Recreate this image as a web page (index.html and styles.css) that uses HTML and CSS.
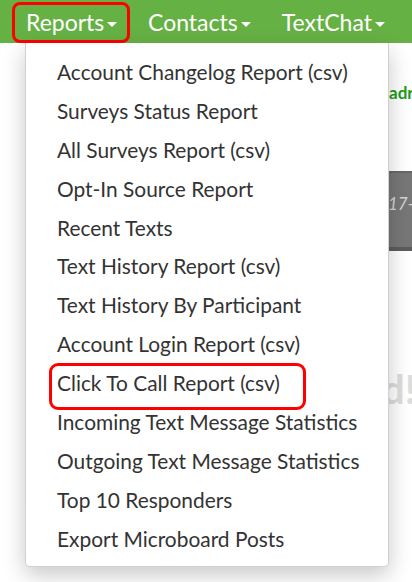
FILE: index.html
```html
<!DOCTYPE html>
<html>
<head>
<meta charset="utf-8">
<link rel="stylesheet" href="styles.css">
</head>
<body>
<nav class="navbar">
  <div class="nav-item highlighted">
    <span class="nav-link">Reports<span class="caret"></span></span>
    <ul class="dropdown">
      <li>Account Changelog Report (csv)</li>
      <li>Surveys Status Report</li>
      <li>All Surveys Report (csv)</li>
      <li>Opt-In Source Report</li>
      <li>Recent Texts</li>
      <li>Text History Report (csv)</li>
      <li>Text History By Participant</li>
      <li>Account Login Report (csv)</li>
      <li class="marked">Click To Call Report (csv)</li>
      <li>Incoming Text Message Statistics</li>
      <li>Outgoing Text Message Statistics</li>
      <li>Top 10 Responders</li>
      <li>Export Microboard Posts</li>
    </ul>
  </div>
  <div class="nav-item"><span class="nav-link">Contacts<span class="caret"></span></span></div>
  <div class="nav-item"><span class="nav-link">TextChat<span class="caret"></span></span></div>
</nav>
<main class="page">
  <p class="login-line">adr</p>
  <div class="status-box"><span class="date">17-2</span></div>
  <h1 class="welcome">d!</h1>
</main>
</body>
</html>
```
FILE: styles.css
```css
* { box-sizing: border-box; }
html, body { margin: 0; padding: 0; }
body {
  font-family: Lato, "Open Sans", sans-serif;
  background: #fff;
  width: 412px;
  height: 582px;
  overflow: hidden;
  position: relative;
}
.navbar {
  display: flex;
  height: 43px;
  background: #66b144;
  padding-left: 12px;
  align-items: stretch;
}
.nav-item {
  position: relative;
  display: flex;
  align-items: center;
}
.nav-item:nth-child(2) { margin-left: 4px; }
.nav-item:nth-child(3) { margin-left: 3px; }
.nav-link {
  color: #fff;
  font-size: 23px;
  padding: 0 14px;
  display: flex;
  align-items: center;
  height: 41px;
  margin-top: 2px;
  line-height: 1;
}
.nav-item.highlighted .nav-link {
  border: 3px solid #f00;
  border-radius: 8px;
  padding: 0 11px;
  width: 118px;
}
.caret {
  display: inline-block;
  width: 0;
  height: 0;
  margin-left: 3px;
  margin-top: 3px;
  border-left: 5px solid transparent;
  border-right: 5px solid transparent;
  border-top: 5px solid #fff;
}
.dropdown {
  position: absolute;
  left: 13px;
  top: 43px;
  width: 364px;
  margin: 0;
  padding: 9px 0 8px 0;
  list-style: none;
  background: #fff;
  border: 1px solid rgba(0,0,0,.18);
  border-top: none;
  border-radius: 0 0 5px 5px;
  box-shadow: 0 8px 22px rgba(0,0,0,.22);
  z-index: 10;
}
.dropdown li {
  height: 38.9px;
  display: flex;
  align-items: center;
  padding-left: 31px;
  font-size: 20.9px;
  color: #333;
  white-space: nowrap;
}
.dropdown li.marked {
  position: relative;
}
.dropdown li.marked::before {
  content: "";
  position: absolute;
  left: 23px;
  top: 0;
  width: 251px;
  height: 41px;
  border: 3px solid #f00;
  border-radius: 9px;
}
.page {
  padding: 40px 0 0 389px;
  white-space: nowrap;
  overflow: hidden;
}
.login-line {
  margin: 0;
  color: #1f9b1f;
  font-weight: bold;
  font-size: 17px;
  line-height: 20px;
  height: 88px;
}
.status-box {
  margin-left: -60px;
  height: 80px;
  background: #777;
  border-top: 2px solid #686868;
  border-bottom: 4px solid #5c5c5c;
  padding: 20px 0 0 59px;
}
.date {
  color: #d4d4d4;
  font-size: 17px;
  font-style: italic;
}
.welcome {
  margin: 118px 0 0 -7px;
  font-size: 40px;
  color: #ddd;
  line-height: 1;
  font-weight: bold;
}
```
